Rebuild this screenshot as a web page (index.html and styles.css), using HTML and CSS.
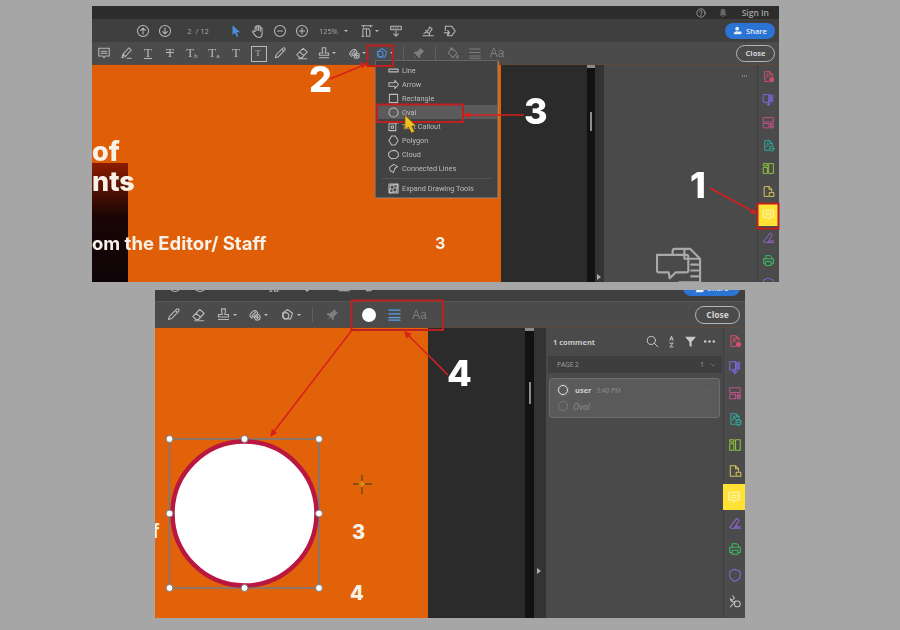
FILE: index.html
```html
<!DOCTYPE html>
<html>
<head>
  <title>Adding an oval comment</title>
  <link rel="stylesheet" href="styles.css">
</head>
<body>
  <svg class="defs" width="0" height="0">
    <symbol id="up" viewBox="0 0 24 24"><circle cx="12" cy="12" r="9.5"/><path d="M12 17V7M8 11l4-4 4 4"/></symbol>
    <symbol id="down" viewBox="0 0 24 24"><circle cx="12" cy="12" r="9.5"/><path d="M12 7v10M8 13l4 4 4-4"/></symbol>
    <symbol id="minus" viewBox="0 0 24 24"><circle cx="12" cy="12" r="9.5"/><path d="M7.5 12h9"/></symbol>
    <symbol id="plus" viewBox="0 0 24 24"><circle cx="12" cy="12" r="9.5"/><path d="M7.5 12h9M12 7.500v9"/></symbol>
    <symbol id="pointer" viewBox="0 0 24 24"><path class="solid" d="M6 2l13 12h-6l3 7-3 1-3-7-4 4z"/></symbol>
    <symbol id="hand" viewBox="0 0 24 24"><path d="M7 13V6a1.500 1.500 0 013 0v5-7a1.500 1.500 0 013 0v7-6a1.500 1.500 0 013 0v7-4a1.500 1.500 0 013 0v9c0 4-3 6-6 6-4 0-5-2-7-5l-3-4c-1-2 2-3 3-1z"/></symbol>
    <symbol id="fit" viewBox="0 0 24 24"><path d="M3 3h18M3 21h4M5 8h9l3 3v10h-6V8M5 8v13"/><path d="M18 3v2M6 3v2"/></symbol>
    <symbol id="stampdown" viewBox="0 0 24 24"><path d="M3 4h18v6H3zM7 7h1M11 7h1M15 7h1M12 12v9M8 17l4 4 4-4"/></symbol>
    <symbol id="sign" viewBox="0 0 24 24"><path d="M3 20h18M5 16c4-1 8-5 10-11l4 3c-3 4-5 8-5 12M8 11l5 5"/></symbol>
    <symbol id="tag" viewBox="0 0 24 24"><path d="M4 4h11l6 8-6 8H8v-5M4 4v7M2 15h9M8 11l3 4-3 4"/></symbol>
    <symbol id="comment" viewBox="0 0 24 24"><path d="M3 4h18v13h-7l-2 3-2-3H3z"/><path d="M7 9h10M7 12.500h10"/></symbol>
    <symbol id="marker" viewBox="0 0 24 24"><path d="M5 20l2-6L17 3l4 4-10 11zM7 14l4 4M14 21h7"/></symbol>
    <symbol id="pencil" viewBox="0 0 24 24"><path d="M4 20l1.500-5L17 3.500a2 2 0 013 3.500L9 18.500zM15 5.500l3.500 3.500"/></symbol>
    <symbol id="eraser" viewBox="0 0 24 24"><path d="M3 15L14 4l7 6-9 10H8zM8 10l7 6M6 22h14"/></symbol>
    <symbol id="stamp" viewBox="0 0 24 24"><path d="M9 3h6v4l-1 5h6v4H4v-4h6L9 7zM4 20h16"/></symbol>
    <symbol id="attach" viewBox="0 0 24 24"><path d="M8 18l-3-3c-2-3 6-11 9-9l3 3c1 2-5 9-7 7l-2-2 6-6"/><circle cx="16.500" cy="16.500" r="4.500"/><path d="M14.500 16.500h4M16.500 14.500v4"/></symbol>
    <symbol id="shapes" viewBox="0 0 24 24"><path d="M12 4l8 6-3 9H7l-3-9z"/><circle cx="9" cy="14" r="5"/></symbol>
    <symbol id="pin" viewBox="0 0 24 24"><path class="solid" d="M14 3l7 7-3 1-4 5v4l-2 1-3-5-6 5 5-6-5-3 1-2h4l5-4z"/></symbol>
    <symbol id="bucket" viewBox="0 0 24 24"><path d="M10 3l9 9-7 8-8-8zM7 3l5 5M20 16c1 2 2 3 0 5-2-1-2-3 0-5z"/></symbol>
    <symbol id="lines" viewBox="0 0 24 24"><path d="M3 5h18M3 11h18M3 17h18M3 21h18"/></symbol>
    <symbol id="share" viewBox="0 0 24 24"><circle class="solid" cx="11" cy="7" r="5"/><path class="solid" d="M2 22c0-6 4-8 9-8s6 2 6 8z"/><circle class="solid" cx="19" cy="18" r="4"/></symbol>
    <symbol id="help" viewBox="0 0 24 24"><circle cx="12" cy="12" r="10"/><path d="M9 9.500a3 3 0 115 2c-1.500 1-2 1.500-2 3M12 17v1"/></symbol>
    <symbol id="bell" viewBox="0 0 24 24"><path class="solid" d="M12 2c4 0 6 3 6 7v5l3 4H3l3-4V9c0-4 2-7 6-7zM9 20h6l-3 3z"/></symbol>
    <symbol id="search" viewBox="0 0 24 24"><circle cx="10" cy="10" r="7.500"/><path d="M15.500 15.500L22 22"/></symbol>
    <symbol id="sort" viewBox="0 0 24 24"><path d="M9 10l3-8 3 8M10 7h4M9 15h6l-6 7h6"/></symbol>
    <symbol id="filter" viewBox="0 0 24 24"><path class="solid" d="M2 3h20l-8 10v9l-4-2v-7z"/></symbol>
    <symbol id="dots" viewBox="0 0 24 24"><circle class="solid" cx="4" cy="12" r="2.400"/><circle class="solid" cx="12" cy="12" r="2.400"/><circle class="solid" cx="20" cy="12" r="2.400"/></symbol>
    <symbol id="chevron" viewBox="0 0 24 24"><path d="M4 8l8 8 8-8"/></symbol>
    <symbol id="bigcomment" viewBox="0 0 48 48"><path d="M17 9V5a2 2 0 012-2h16l10 10v32H19M29 3v10h16M1 9h30a2 2 0 012 2v14a2 2 0 01-2 2h-11l-6 6-1-6H3a2 2 0 01-2-2V11a2 2 0 012-2zM36 19h7M36 25h7M36 31h7M24 37h19"/></symbol>

    <symbol id="r-add" viewBox="0 0 24 24"><path d="M13 21H5V3h9l5 5v5M14 3v5h5M8 15c2-2 2-7 2-8s3 6 4 6"/><circle class="solid" cx="18" cy="18" r="4.500"/></symbol>
    <symbol id="r-merge" viewBox="0 0 24 24"><path class="solid soft" d="M12 3h9v14h-9z"/><path d="M3 3h10v14H3zM12 15v7M8 19l4 4 4-4"/></symbol>
    <symbol id="r-organize" viewBox="0 0 24 24"><path d="M3 3h18v8H3zM3 14h10v8H3zM16 14h5v3h-5zM16 19h5v3h-5z"/></symbol>
    <symbol id="r-export" viewBox="0 0 24 24"><path d="M13 21H5V3h9l5 5v5M14 3v5h5M8 15c2-2 2-7 2-8s3 6 4 6"/><circle cx="18" cy="18" r="4.500"/><path d="M16 18h4"/></symbol>
    <symbol id="r-edit" viewBox="0 0 24 24"><path d="M3 3h7v4H3zM3 10h7v11H3zM13 3h8v18h-8z"/></symbol>
    <symbol id="r-file" viewBox="0 0 24 24"><path d="M12 21H4V3h9l5 5v4M13 3v5h5M14 14h8v7h-8z"/></symbol>
    <symbol id="r-note" viewBox="0 0 24 24"><path d="M3 4h18v13h-7l-2 4-2-4H3z"/><path d="M7 9h10M7 12.500h10"/></symbol>
    <symbol id="r-sign" viewBox="0 0 24 24"><path d="M3 19L15 4l4 3c-2 5-6 9-7 13 2-3 5-2 9-1M3 19l2 2h16"/></symbol>
    <symbol id="r-print" viewBox="0 0 24 24"><path d="M7 9V3h8l3 3v3M3 9h18v9h-3M3 9v9h3M7 14h10v7H7z"/></symbol>
    <symbol id="r-shield" viewBox="0 0 24 24"><path d="M12 2l9 4v7c0 5-4 8-9 10-5-2-9-5-9-10V6z"/></symbol>
    <symbol id="r-tools" viewBox="0 0 24 24"><circle cx="16" cy="17" r="5"/><path d="M4 22l9-10M8 3l3 4-4 4-3-3c0 3 3 6 6 5"/></symbol>

    <symbol id="m-line" viewBox="0 0 24 24"><path d="M2 9h20v6H2z"/></symbol>
    <symbol id="m-arrow" viewBox="0 0 24 24"><path d="M2 8h13V3l8 9-8 9v-5H2z"/></symbol>
    <symbol id="m-rect" viewBox="0 0 24 24"><path d="M3 3h18v18H3z"/></symbol>
    <symbol id="m-oval" viewBox="0 0 24 24"><circle cx="12" cy="12" r="10"/></symbol>
    <symbol id="m-callout" viewBox="0 0 24 24"><path d="M2 6h15v15H2zM7 11h5v5H7zM17 6l5-4M19 2h3v3"/></symbol>
    <symbol id="m-polygon" viewBox="0 0 24 24"><path d="M8 2h8l6 10-6 10H8L2 12z"/></symbol>
    <symbol id="m-cloud" viewBox="0 0 24 24"><path d="M7 4l9-1 6 5 1 7-5 5-11 1-5-5-1-7z"/></symbol>
    <symbol id="m-connected" viewBox="0 0 24 24"><path d="M3 10l9-7 9 5-6 4-3 9-7-4z"/></symbol>
    <symbol id="m-expand" viewBox="0 0 24 24"><path d="M2 2h20v20H2zM4 13h7v7H4zM13 4h7v7h-7zM5 11V5h6M19 13v6h-6"/></symbol>
  </svg>

  <div class="page">

    <div class="shot shot-top">
      <div class="titlebar">
        <svg class="ico"><use href="#help"/></svg>
        <svg class="ico bell"><use href="#bell"/></svg>
        <span class="signin">Sign In</span>
      </div>
      <div class="bar bar-main">
        <span class="tool"><svg class="ico"><use href="#up"/></svg></span>
        <span class="tool"><svg class="ico"><use href="#down"/></svg></span>
        <span class="pager">2 &nbsp;/ 12</span>
        <span class="tool tool-pointer"><svg class="ico blue"><use href="#pointer"/></svg></span>
        <span class="tool"><svg class="ico"><use href="#hand"/></svg></span>
        <span class="tool"><svg class="ico"><use href="#minus"/></svg></span>
        <span class="tool"><svg class="ico"><use href="#plus"/></svg></span>
        <span class="zoomval">125%<i class="caret"></i></span>
        <span class="tool"><svg class="ico"><use href="#fit"/></svg><i class="caret"></i></span>
        <span class="tool tool-stampdown"><svg class="ico"><use href="#stampdown"/></svg></span>
        <span class="tool tool-sign"><svg class="ico"><use href="#sign"/></svg></span>
        <span class="tool tool-tag"><svg class="ico"><use href="#tag"/></svg></span>
        <button class="share"><svg class="ico-sm"><use href="#share"/></svg>Share</button>
      </div>
      <div class="bar bar-tools">
        <span class="tool"><svg class="ico"><use href="#comment"/></svg></span>
        <span class="tool"><svg class="ico"><use href="#marker"/></svg></span>
        <span class="tool glyph under">T</span>
        <span class="tool glyph strike">T</span>
        <span class="tool glyph">T<small>b</small></span>
        <span class="tool glyph">T<small>a</small></span>
        <span class="tool glyph">T</span>
        <span class="tool glyph framed">T</span>
        <span class="tool"><svg class="ico"><use href="#pencil"/></svg></span>
        <span class="tool"><svg class="ico"><use href="#eraser"/></svg></span>
        <span class="tool"><svg class="ico"><use href="#stamp"/></svg><i class="caret"></i></span>
        <span class="tool tool-attach"><svg class="ico"><use href="#attach"/></svg><i class="caret"></i></span>
        <span class="tool tool-shapes"><svg class="ico blue"><use href="#shapes"/></svg><i class="caret"></i></span>
        <span class="sep sep-a"></span>
        <span class="tool"><svg class="ico dim"><use href="#pin"/></svg></span>
        <span class="sep sep-b"></span>
        <span class="tool"><svg class="ico dim"><use href="#bucket"/></svg></span>
        <span class="tool"><svg class="ico dim"><use href="#lines"/></svg></span>
        <span class="tool aa">Aa</span>
        <button class="close">Close</button>
      </div>
      <div class="workspace">
        <div class="doc">
          <div class="doc-photo"></div>
          <span class="doc-title doc-of">of</span>
          <span class="doc-title doc-nts">nts</span>
          <span class="doc-line doc-editor">om the Editor/ Staff</span>
          <span class="doc-line doc-num">3</span>
        </div>
        <div class="gutter"></div>
        <div class="scroll"><i class="thumb-top"></i><i class="thumb"></i></div>
        <div class="handle"><i class="handle-arrow"></i></div>
        <div class="panel">
          <svg class="panel-dots"><use href="#dots"/></svg>
          <svg class="big-comment"><use href="#bigcomment"/></svg>
        </div>
        <div class="rail">
          <span class="rail-item c-pink"><svg><use href="#r-add"/></svg></span>
          <span class="rail-item c-violet"><svg><use href="#r-merge"/></svg></span>
          <span class="rail-item c-magenta"><svg><use href="#r-organize"/></svg></span>
          <span class="rail-item c-teal"><svg><use href="#r-export"/></svg></span>
          <span class="rail-item c-lime"><svg><use href="#r-edit"/></svg></span>
          <span class="rail-item c-sand"><svg><use href="#r-file"/></svg></span>
          <span class="rail-item active"><svg><use href="#r-note"/></svg></span>
          <span class="rail-item c-purple"><svg><use href="#r-sign"/></svg></span>
          <span class="rail-item c-green"><svg><use href="#r-print"/></svg></span>
          <span class="rail-item c-indigo"><svg><use href="#r-shield"/></svg></span>
        </div>
      </div>
    </div>

    <div class="shot shot-bottom">
      <div class="bar bar-clipped">
        <span class="tool"><svg class="ico"><use href="#up"/></svg></span>
        <span class="tool"><svg class="ico"><use href="#down"/></svg></span>
        <span class="pager-clip"></span>
        <span class="tool"><svg class="ico"><use href="#fit"/></svg></span>
        <span class="tool tool-stampdown2"><svg class="ico"><use href="#stampdown"/></svg></span>
        <span class="tool tool-sign2"><svg class="ico"><use href="#sign"/></svg></span>
        <span class="tool"><svg class="ico"><use href="#tag"/></svg></span>
        <button class="share share-clip"><svg class="ico-sm"><use href="#share"/></svg>Share</button>
      </div>
      <div class="bar bar-tools2">
        <span class="tool"><svg class="ico"><use href="#pencil"/></svg></span>
        <span class="tool"><svg class="ico"><use href="#eraser"/></svg></span>
        <span class="tool"><svg class="ico"><use href="#stamp"/></svg><i class="caret"></i></span>
        <span class="tool tool-wide"><svg class="ico"><use href="#attach"/></svg><i class="caret"></i></span>
        <span class="tool tool-wide"><svg class="ico"><use href="#shapes"/></svg><i class="caret"></i></span>
        <span class="sep"></span>
        <span class="tool"><svg class="ico dim"><use href="#pin"/></svg></span>
        <span class="dot"></span>
        <span class="tool"><svg class="ico sky"><use href="#lines"/></svg></span>
        <span class="tool aa">Aa</span>
        <button class="close">Close</button>
      </div>
      <div class="workspace">
        <div class="doc">
          <span class="doc-line doc-f">f</span>
          <span class="doc-big doc-three">3</span>
          <span class="doc-big doc-four">4</span>
        </div>
        <div class="gutter"></div>
        <div class="scroll"><i class="thumb-top"></i><i class="thumb"></i></div>
        <div class="handle"><i class="handle-arrow"></i></div>
        <div class="panel">
          <div class="panel-head">
            <span class="count">1 comment</span>
            <svg class="ico-md"><use href="#search"/></svg>
            <svg class="ico-md"><use href="#sort"/></svg>
            <svg class="ico-md"><use href="#filter"/></svg>
            <svg class="ico-md"><use href="#dots"/></svg>
          </div>
          <div class="page-row">
            <span>PAGE 2</span>
            <span class="page-count">1<svg class="ico-xs"><use href="#chevron"/></svg></span>
          </div>
          <div class="card">
            <div class="card-row">
              <i class="ring ring-on"></i>
              <b class="user">user</b>
              <span class="time">3:40 PM</span>
              <svg class="card-dots"><use href="#dots"/></svg>
            </div>
            <div class="card-row">
              <i class="ring"></i>
              <em class="note">Oval</em>
            </div>
          </div>
        </div>
        <div class="rail">
          <span class="rail-item c-pink"><svg><use href="#r-add"/></svg></span>
          <span class="rail-item c-violet"><svg><use href="#r-merge"/></svg></span>
          <span class="rail-item c-magenta"><svg><use href="#r-organize"/></svg></span>
          <span class="rail-item c-teal"><svg><use href="#r-export"/></svg></span>
          <span class="rail-item c-lime"><svg><use href="#r-edit"/></svg></span>
          <span class="rail-item c-sand"><svg><use href="#r-file"/></svg></span>
          <span class="rail-item active"><svg><use href="#r-note"/></svg></span>
          <span class="rail-item c-purple"><svg><use href="#r-sign"/></svg></span>
          <span class="rail-item c-green"><svg><use href="#r-print"/></svg></span>
          <span class="rail-item c-indigo"><svg><use href="#r-shield"/></svg></span>
          <span class="rail-item c-gray"><svg><use href="#r-tools"/></svg></span>
        </div>
      </div>
    </div>

    <div class="menu">
      <div class="menu-item"><svg><use href="#m-line"/></svg>Line</div>
      <div class="menu-item"><svg><use href="#m-arrow"/></svg>Arrow</div>
      <div class="menu-item"><svg><use href="#m-rect"/></svg>Rectangle</div>
      <div class="menu-item hover"><svg><use href="#m-oval"/></svg>Oval</div>
      <div class="menu-item"><svg><use href="#m-callout"/></svg>Text Callout</div>
      <div class="menu-item"><svg><use href="#m-polygon"/></svg>Polygon</div>
      <div class="menu-item"><svg><use href="#m-cloud"/></svg>Cloud</div>
      <div class="menu-item"><svg><use href="#m-connected"/></svg>Connected Lines</div>
      <div class="menu-sep"></div>
      <div class="menu-item"><svg><use href="#m-expand"/></svg>Expand Drawing Tools</div>
    </div>

    <!-- the drawn oval and the red callouts sit over both screenshots -->
    <svg class="overlay" viewBox="0 0 900 630">
      <rect class="bbox" x="169.500" y="439" width="149.500" height="149"/>
      <circle class="oval" cx="244.500" cy="513.500" r="72"/>
      <g class="handles">
        <circle cx="169.500" cy="439" r="3.500"/><circle cx="244.500" cy="439" r="3.500"/><circle cx="319" cy="439" r="3.500"/>
        <circle cx="169.500" cy="513.500" r="3.500"/><circle cx="319" cy="513.500" r="3.500"/>
        <circle cx="169.500" cy="588" r="3.500"/><circle cx="244.500" cy="588" r="3.500"/><circle cx="319" cy="588" r="3.500"/>
      </g>
      <path class="cross" d="M353 484h6M365 484h7M362 475v6M362 487v7"/>
      <path class="cross-mid" d="M359 484h6M362 481v6"/>

      <g class="mark">
        <rect x="367.500" y="45.500" width="25.500" height="20.500"/>
        <rect x="377" y="104.500" width="86" height="17.500"/>
        <rect x="757.500" y="203.500" width="21" height="25"/>
        <rect x="351.500" y="300.500" width="91.500" height="29.500"/>
        <path d="M330 79l34-14M524 115h-58M710 188l44 24M352 330l-80 104M448 375l-42-42"/>
      </g>
      <g class="mark-head">
        <path d="M367 63.500l-7-1 2.500 6z"/>
        <path d="M463 115l7-3v6z"/>
        <path d="M757 214l-7-.500 3-5z"/>
        <path d="M270 437l2-8 5 4z"/>
        <path d="M404 331l7.500 2.500-5 5z"/>
      </g>
      <path class="cursor" d="M405 115v15l3.500-3 3 6 3-1.500-3-5.500h4.500z"/>
    </svg>

    <span class="step step-1">1</span>
    <span class="step step-2">2</span>
    <span class="step step-3">3</span>
    <span class="step step-4">4</span>
  </div>
</body>
</html>
```

FILE: styles.css
```css
* {
  box-sizing: border-box;
}
body {
  margin: 0;
  background: #a6a6a6;
  font-family: "Open Sans", "Liberation Sans", sans-serif;
  color: #cfcfcf;
}
button {
  border: none;
  outline: none;
  font-family: inherit;
}
i, em {
  display: block;
}
.defs {
  position: absolute;
}
svg {
  fill: none;
  stroke: currentColor;
  stroke-width: 1.8;
  stroke-linejoin: round;
  stroke-linecap: round;
  overflow: visible;
}
symbol .solid {
  fill: currentColor;
  stroke: none;
}
symbol .soft {
  fill-opacity: .7;
}

.page {
  position: relative;
  width: 900px;
  height: 630px;
  padding-top: 6px;
  display: flex;
  flex-direction: column;
  gap: 8px;
  overflow: hidden;
  filter: blur(.45px);
}

.shot {
  display: flex;
  flex-direction: column;
  overflow: hidden;
  background: #4a4a4a;
}
.shot-top {
  width: 687px;
  height: 276px;
  margin-left: 92px;
}
.shot-bottom {
  width: 590px;
  height: 328px;
  margin-left: 155px;
}

/* toolbars */
.titlebar {
  height: 13px;
  flex: none;
  display: flex;
  align-items: center;
  justify-content: flex-end;
  padding-right: 10px;
  background: #2c2c2c;
  color: #8f8f8f;
}
.titlebar .ico {
  width: 10px;
  height: 10px;
}
.titlebar .bell {
  margin-left: 12px;
  color: #666;
}
.signin {
  margin-left: 14px;
  font-size: 8.500px;
  font-weight: 600;
  color: #a5a5a5;
}
.bar {
  display: flex;
  align-items: center;
  flex: none;
}
.bar-main {
  height: 23px;
  padding: 0 4px 0 40px;
  background: #3f3f3f;
}
.bar-tools {
  height: 23px;
  padding: 0 4px 0 1px;
  background: #4b4b4b;
  border-bottom: 1px solid #5c4a3a;
}
.bar-clipped {
  height: 12px;
  padding: 0 5px 0 7px;
  align-items: flex-end;
  background: #3f3f3f;
  border-bottom: 1px solid #555;
}
.bar-clipped .tool {
  width: 25px;
  height: 22px;
  margin-bottom: 4px;
  margin-top: -20px;
}
.bar-tools2 {
  height: 26px;
  padding: 0 5px 0 6px;
  background: #4b4b4b;
  border-bottom: 1px solid #5c4a3a;
}
.bar-tools2 .ico {
  width: 15px;
  height: 15px;
}
.tool {
  position: relative;
  width: 22px;
  height: 22px;
  flex: none;
  display: flex;
  align-items: center;
  justify-content: center;
}
.ico {
  width: 14px;
  height: 14px;
  flex: none;
  color: #b8b8b8;
}
.ico.blue {
  color: #4a8fdc;
}
.ico.sky {
  color: #5aa0e6;
}
.ico.dim {
  color: #7e7e7e;
}
.ico-sm {
  width: 9px;
  height: 9px;
}
.caret {
  position: absolute;
  right: -1px;
  top: 10px;
  border: 2px solid transparent;
  border-top-color: #bdbdbd;
}
.sep {
  width: 1px;
  height: 14px;
  flex: none;
  background: #606060;
}
.glyph {
  font-family: "Liberation Serif", serif;
  font-size: 13px;
  color: #b8b8b8;
}
.glyph small {
  font-family: "Liberation Sans", sans-serif;
  font-size: 6px;
  margin-top: 5px;
}
.under {
  text-decoration: underline;
}
.strike {
  text-decoration: line-through;
}
.framed::before {
  content: '';
  position: absolute;
  left: 4px;
  top: 4px;
  width: 14px;
  height: 14px;
  border: 1.500px solid #b8b8b8;
}
.framed {
  font-size: 9px;
}
.aa {
  font-family: "Liberation Sans", sans-serif;
  font-size: 12px;
  color: #7e7e7e;
}

.pager {
  width: 44px;
  flex: none;
  font-size: 7.500px;
  color: #a8a8a8;
  text-align: center;
}
.tool-pointer {
  margin-left: 5px;
}
.zoomval {
  position: relative;
  width: 43px;
  padding-left: 6px;
  flex: none;
  font-size: 7.500px;
  color: #a8a8a8;
}
.zoomval .caret {
  right: 8px;
  top: 4px;
}
.tool-stampdown {
  margin-left: 7px;
}
.tool-sign {
  margin-left: 10px;
}
.tool-tag {
  margin-right: 0;
}
.tool-attach {
  margin-left: 8px;
}
.tool-shapes {
  margin-left: 6px;
}
.sep-a {
  margin: 0 4px 0 10px;
}
.sep-b {
  margin: 0 6px 0 5px;
}
.share {
  margin-left: auto;
  width: 50px;
  height: 16px;
  padding: 0;
  display: flex;
  align-items: center;
  justify-content: center;
  gap: 4px;
  border-radius: 8px;
  background: #2b74d4;
  color: #e8eef8;
  font-size: 7.500px;
  font-weight: 600;
}
.share-clip {
  width: 57px;
  height: 16px;
  flex: none;
  margin-bottom: 5px;
}
.close {
  margin-left: auto;
  width: 39px;
  height: 17px;
  padding: 0;
  border: 1px solid #b5b5b5;
  border-radius: 9px;
  background: transparent;
  color: #d5d5d5;
  font-size: 7.500px;
  font-weight: 700;
}
.bar-tools2 .close {
  width: 45px;
  height: 18px;
  font-size: 8.500px;
}

/* bottom shot toolbar spacing */
.bar-tools2 .tool {
  width: 25px;
}
.tool-wide {
  margin-left: 6px;
}
.bar-tools2 .tool-wide + .tool-wide {
  margin-left: 8px;
}
.bar-tools2 .sep {
  margin: 0 7px 0 12px;
}
.dot {
  width: 14px;
  height: 14px;
  margin: 0 6px 0 17px;
  flex: none;
  border-radius: 50%;
  background: #fff;
}
.pager-clip {
  width: 50px;
  flex: none;
}
.tool-stampdown2 {
  margin-left: 7px;
}
.tool-sign2 {
  margin-left: 12px;
}

/* document and side panel */
.workspace {
  flex: 1;
  min-height: 0;
  display: flex;
}
.doc {
  position: relative;
  overflow: hidden;
  flex: none;
  background: #e15e08;
}
.shot-top .doc {
  width: 409px;
}
.shot-bottom .doc {
  width: 273px;
  background: #e2620a;
}
.gutter {
  flex: none;
  background: #2b2b2b;
}
.shot-top .gutter {
  width: 86px;
}
.shot-bottom .gutter {
  width: 97px;
}
.scroll {
  position: relative;
  width: 8px;
  flex: none;
  background: #121212;
}
.shot-bottom .scroll {
  width: 9px;
}
.thumb-top {
  height: 3px;
  background: #8a8a8a;
}
.thumb {
  position: absolute;
  left: 3px;
  top: 47px;
  width: 2px;
  height: 19px;
  background: #8d8d8d;
}
.shot-bottom .thumb {
  left: 4px;
  top: 54px;
  height: 22px;
}
.handle {
  position: relative;
  width: 9px;
  flex: none;
  background: #333;
}
.shot-bottom .handle {
  width: 12px;
}
.handle-arrow {
  position: absolute;
  left: 2px;
  bottom: 2px;
  border: 3px solid transparent;
  border-left: 4px solid #b0b0b0;
}
.shot-bottom .handle-arrow {
  left: 3px;
  bottom: 44px;
}
.panel {
  position: relative;
  flex: 1;
  min-width: 0;
  background: #4a4a4a;
}
.panel-dots {
  position: absolute;
  right: 8px;
  top: 8px;
  width: 9px;
  height: 6px;
  color: #c8c8c8;
}
.big-comment {
  position: absolute;
  left: 52px;
  top: 181px;
  width: 47px;
  height: 47px;
  color: #a9a9a9;
  stroke-width: 2.200;
}
.rail {
  width: 22px;
  flex: none;
  display: flex;
  flex-direction: column;
  border-left: 1px solid #3f3f3f;
  background: #4b4b4b;
}
.rail-item {
  height: 23px;
  flex: none;
  display: flex;
  align-items: center;
  justify-content: center;
}
.shot-bottom .rail-item {
  height: 26px;
}
.rail-item svg {
  width: 13px;
  height: 13px;
}
.shot-bottom .rail-item svg {
  width: 14px;
  height: 14px;
}
.rail-item.active {
  margin-left: -1px;
  background: #ffe234;
  color: #fff6c0;
}
.c-pink { color: #d2516f; }
.c-violet { color: #7a6be4; }
.c-magenta { color: #c2508e; }
.c-teal { color: #2fa99c; }
.c-lime { color: #8cc63f; }
.c-sand { color: #d8c35c; }
.c-purple { color: #9a63d2; }
.c-green { color: #3cbf5e; }
.c-indigo { color: #6f6fd2; }
.c-gray { color: #bdbdbd; }

/* page content behind the viewer, cut by the document edge */
.doc-title, .doc-line, .doc-big {
  position: absolute;
  font-family: "Inter", "Liberation Sans", sans-serif;
  font-weight: 800;
  color: #f7f1e8;
  line-height: 1;
  white-space: nowrap;
}
.doc-title {
  font-size: 27px;
}
.doc-of {
  left: 0;
  top: 73px;
}
.doc-nts {
  left: 0;
  top: 103px;
}
.doc-photo {
  position: absolute;
  left: 0;
  top: 98px;
  bottom: 0;
  width: 36px;
  background: linear-gradient(#8c1c00, #1a0505 45%, #0e0508);
}
.doc-line {
  font-size: 18px;
  font-weight: 700;
}
.doc-editor {
  left: 0;
  top: 169px;
  font-size: 18.500px;
}
.doc-num {
  left: 343px;
  top: 170px;
  font-size: 16px;
}
.doc-f {
  left: -3px;
  top: 194px;
  font-size: 19px;
}
.doc-big {
  font-size: 20px;
}
.doc-three {
  left: 197px;
  top: 194px;
}
.doc-four {
  left: 195px;
  top: 255px;
}

/* comments list */
.panel-head {
  height: 27px;
  padding: 0 7px;
  display: flex;
  align-items: center;
  gap: 6px;
  color: #c8c8c8;
}
.count {
  margin-right: auto;
  font-size: 7.500px;
  font-weight: 700;
}
.ico-md {
  width: 13px;
  height: 13px;
}
.page-row {
  height: 17px;
  margin: 1px 1px 0 2px;
  padding: 0 6px 0 9px;
  display: flex;
  align-items: center;
  justify-content: space-between;
  background: #3e3e3e;
  color: #a0a0a0;
  font-size: 6.500px;
}
.page-count {
  display: flex;
  align-items: center;
  gap: 6px;
}
.ico-xs {
  width: 6px;
  height: 6px;
}
.card {
  height: 40px;
  margin: 5px 3px 0;
  padding: 3px 6px 0 8px;
  border: 1px solid #6c6c6c;
  border-radius: 3px;
  background: #5a5a5a;
}
.card-row {
  height: 16px;
  display: flex;
  align-items: center;
  gap: 5px;
}
.ring {
  width: 10px;
  height: 10px;
  flex: none;
  border: 1.500px solid #787878;
  border-radius: 50%;
}
.ring-on {
  border-color: #e0e0e0;
  box-shadow: 0 0 0 1.500px #666;
}
.user {
  margin-left: 2px;
  font-size: 7.500px;
  color: #d0d0d0;
}
.time {
  font-size: 6.500px;
  color: #8f8f8f;
}
.card-dots {
  margin-left: auto;
  width: 8px;
  height: 5px;
  color: #6f6f6f;
}
.note {
  font-size: 8.500px;
  color: #8c8c8c;
}

/* shape menu */
.menu {
  position: absolute;
  left: 375px;
  top: 60px;
  width: 123px;
  height: 138px;
  padding-top: 2px;
  border: 1px solid #666;
  background: #424242;
  box-shadow: 1px 1px 0 #d8702a;
}
.menu-item {
  height: 14px;
  padding-left: 12px;
  display: flex;
  align-items: center;
  gap: 3px;
  font-family: "Roboto", "Liberation Sans", sans-serif;
  font-size: 7.300px;
  color: #bcbcbc;
}
.menu-item svg {
  width: 11px;
  height: 11px;
  flex: none;
  stroke-width: 2.200;
}
.menu-item.hover {
  background: #5b5b5b;
}
.menu-sep {
  height: 1px;
  margin: 3px 6px 2px;
  background: #555;
}

/* annotations */
.overlay {
  position: absolute;
  left: 0;
  top: 0;
  width: 900px;
  height: 630px;
  stroke-linecap: butt;
  stroke-linejoin: miter;
}
.bbox {
  stroke: #7b7a80;
  stroke-width: 1.600;
}
.oval {
  fill: #fff;
  stroke: #b9173f;
  stroke-width: 4.500;
}
.handles circle {
  fill: #fff;
  stroke: #77777c;
  stroke-width: 1;
}
.cross {
  stroke: #6b4a10;
  stroke-width: 1.400;
}
.cross-mid {
  stroke: #d8a420;
  stroke-width: 1.200;
}
.mark {
  stroke: #d8201c;
  stroke-width: 1.500;
}
.mark rect {
  stroke: #c01f1f;
  stroke-width: 2;
}
.mark-head path {
  fill: #d8201c;
  stroke: none;
}
.cursor {
  fill: #f0c020;
  stroke: #6a5210;
  stroke-width: .6;
}
.step {
  position: absolute;
  font-family: "Inter", "Liberation Sans", sans-serif;
  font-size: 36px;
  font-weight: 800;
  line-height: 1;
  color: #fff;
}
.step-1 {
  left: 690px;
  top: 167px;
}
.step-2 {
  left: 309px;
  top: 61px;
}
.step-3 {
  left: 524px;
  top: 93px;
}
.step-4 {
  left: 447px;
  top: 355px;
}
```
